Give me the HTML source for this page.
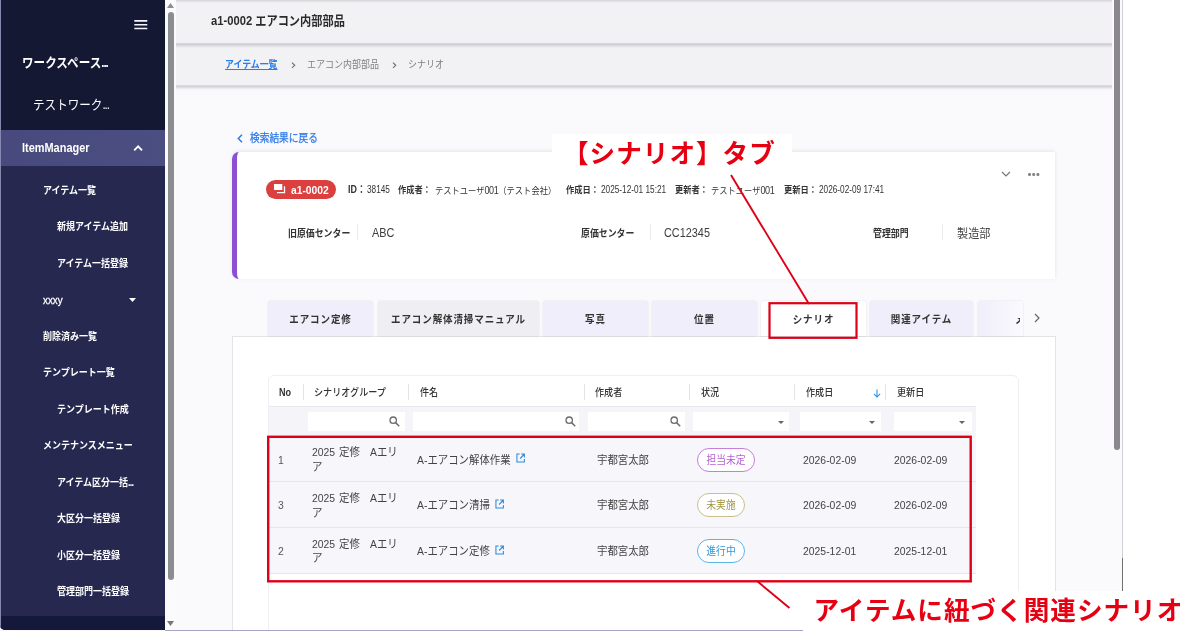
<!DOCTYPE html>
<html lang="ja">
<head>
<meta charset="utf-8">
<title>a1-0002 エアコン内部部品</title>
<style>
*{box-sizing:border-box;margin:0;padding:0}
html,body{width:1200px;height:644px;overflow:hidden;background:#fff}
body{position:relative;font-family:"Liberation Sans","Noto Sans CJK JP",sans-serif;color:#333;font-size:12px}
.abs{position:absolute}
.t,.th,.td{position:absolute;white-space:nowrap;line-height:1;transform-origin:0 50%;transform:scaleX(.89)}
.c{display:inline-block;transform-origin:0 50%}
/* screenshot frame */
#shot{position:absolute;left:0;top:0;width:1123px;height:631px;overflow:hidden;background:#faf9fc;will-change:transform}
/* sidebar */
#side{position:absolute;left:0;top:0;width:165px;height:630px;background:#262850;color:#fff;border-bottom-left-radius:5px;overflow:hidden}
#side .top{position:absolute;left:0;top:0;width:165px;height:130px;background:#141833}
#side .im{position:absolute;left:0;top:130px;width:165px;height:36px;background:linear-gradient(90deg,#484a7d,#4b4e81)}
#side .bot{position:absolute;left:0;top:616px;width:165px;height:14px;background:#14183a}
#side .edge{position:absolute;left:0;top:0;width:1px;height:630px;background:#8587ad}
.sm{font-weight:700;font-size:10px;color:#fff;transform:scaleX(.9)}
/* side scrollbar */
#sscr{position:absolute;left:165px;top:0;width:11px;height:630px;background:#fbfbfd}
#sscr .thumb{position:absolute;left:3px;top:12px;width:6px;height:568px;background:#8b8d91;border-radius:3px}
/* header */
#hdr{position:absolute;left:176px;top:0;width:936px;height:43px;background:#f2f1f4}
#bc{position:absolute;left:176px;top:47px;width:936px;height:38px;background:#f2f1f4}
.band{position:absolute;left:176px;width:936px;height:5px}
/* right scrollbar */
#rscr{position:absolute;left:1113px;top:0;width:9px;height:630px;background:#faf9fc}
#rscr .thumb{position:absolute;left:1px;top:-4px;width:6px;height:454px;background:#8a888c;border-radius:3px}
#rline{position:absolute;left:1122px;top:0;width:1px;height:591px;background:#d0cfd3}
/* card */
#card{position:absolute;left:232px;top:151.500px;width:823px;height:127px;background:#fff;border-left:5px solid #8a4fd3;border-radius:7px 0 0 7px;box-shadow:0 -1px 4px rgba(0,20,10,.09)}
.lbl{font-weight:700;font-size:10px;color:#333}
/* tabs */
.tab{position:absolute;top:301px;height:35px;background:#efeefa;border-radius:3px 3px 0 0;box-shadow:0 0 2px rgba(0,0,0,.12)}
.tab span{position:absolute;left:0;right:0;top:12.700px;text-align:center;font-weight:700;font-size:10.7px;letter-spacing:1px;color:#333;line-height:1;transform:scaleX(.89)}
#panel{position:absolute;left:232px;top:336px;width:824px;height:300px;background:#fff;border:1px solid #e4e3e8}
/* table */
#tbl{position:absolute;left:268px;top:375px;width:751px;height:260px;border:1px solid #efeef3;border-radius:6px 6px 0 0;background:#fff}
.row{position:absolute;left:269px;width:707px;background:#f7f6fb;border-bottom:1px solid #e6e5ea}
.fi{position:absolute;top:412px;height:19px;background:#fff}
.vsep{position:absolute;top:384px;width:1px;height:16px;background:#e3e2e6}
.th{top:388px;font-weight:500;font-size:10.2px;color:#333}
.td{font-size:11.7px;color:#444}
.pill{position:absolute;height:24px;border-radius:12px;border:1px solid;background:#fff}
.pill span{position:absolute;left:0;right:0;top:6px;text-align:center;font-size:11px;line-height:1;transform:scaleX(.89)}
/* annotations */
.red{color:#e60012;font-weight:700;font-size:25.6px;white-space:nowrap;line-height:1;font-family:"Liberation Sans","Noto Sans CJK JP",sans-serif}
</style>
</head>
<body>
<div id="all" style="position:absolute;left:0;top:0;width:1200px;height:644px;will-change:transform">
<div id="shot">
  <div id="hdr"></div>
  <div id="bc"></div>
  <div class="band" style="top:0;height:3px;background:linear-gradient(#d3d2d6,#e4e3e7 50%,#f2f1f4)"></div>
  <div class="band" style="top:43px;background:linear-gradient(#d9d8dc,#d0cfd3 30%,#e6e5e8 70%,#f2f1f4)"></div>
  <div class="band" style="top:85px;background:linear-gradient(#dddce0,#d3d2d6 30%,#ebeaee 70%,#faf9fc)"></div>

  <!-- sidebar -->
  <div id="side">
    <div class="top"></div><div class="im"></div><div class="bot"></div><div class="edge"></div>
    <svg class="abs" style="left:134px;top:19px" width="14" height="11" viewBox="0 0 14 11"><path d="M.3 1.900h13M.3 5.700h13M.3 9.500h13" stroke="#f4f4ff" stroke-width="1.600" fill="none"/></svg>
    <div class="t" style="left:22px;top:56px;font-weight:700;font-size:13px">ワークスペース<span style="letter-spacing:-1.2px">...</span></div>
    <div class="t" style="left:33px;top:98px;font-size:13px">テストワーク<span style="letter-spacing:-1.2px">...</span></div>
    <div class="t" style="left:22px;top:141.500px;font-weight:700;font-size:12.3px">ItemManager</div>
    <svg class="abs" style="left:133px;top:143.500px" width="11" height="8" viewBox="0 0 11 8"><path d="M1.200 6.300L5.100 2.400 9 6.300" stroke="#fff" stroke-width="1.900" fill="none"/></svg>
    <div class="t sm" style="left:43px;top:185.8px">アイテム一覧</div>
    <div class="t sm" style="left:57px;top:221.8px">新規アイテム追加</div>
    <div class="t sm" style="left:57px;top:258.8px">アイテム一括登録</div>
    <div class="t sm" style="left:43px;top:294.8px;font-weight:400;font-size:11.5px;transform:scaleX(.85);-webkit-text-stroke:.3px #fff">xxxy</div>
    <svg class="abs" style="left:129px;top:298px" width="7" height="4" viewBox="0 0 7 4"><path d="M0 0h7L3.5 4z" fill="#fff"/></svg>
    <div class="t sm" style="left:43px;top:331.8px">削除済み一覧</div>
    <div class="t sm" style="left:43px;top:367.8px">テンプレート一覧</div>
    <div class="t sm" style="left:57px;top:404.8px">テンプレート作成</div>
    <div class="t sm" style="left:43px;top:440.8px">メンテナンスメニュー</div>
    <div class="t sm" style="left:57px;top:477.8px">アイテム区分一括<span style="letter-spacing:-.9px">...</span></div>
    <div class="t sm" style="left:57px;top:513.8px">大区分一括登録</div>
    <div class="t sm" style="left:57px;top:550.8px">小区分一括登録</div>
    <div class="t sm" style="left:57px;top:586.8px">管理部門一括登録</div>
  </div>
  <div id="sscr"><div class="thumb"></div>
    <svg class="abs" style="left:2px;top:3px" width="7" height="5" viewBox="0 0 7 5"><path d="M0 5h7L3.5 0z" fill="#8e8d91"/></svg>
    <svg class="abs" style="left:2px;top:621px" width="7" height="5" viewBox="0 0 7 5"><path d="M0 0h7L3.5 5z" fill="#77767a"/></svg>
  </div>

  <div id="rscr"><div class="thumb"></div></div>

  <!-- header -->
  <div class="t" style="left:211px;top:15px;font-weight:700;font-size:12.6px;color:#2b2b2b">a1-0002 エアコン内部部品</div>
  <div class="t" style="left:225px;top:60.400px;font-weight:700;font-size:10px;color:#2b7de9;text-decoration:underline">アイテム一覧</div>
  <svg class="abs" style="left:290.5px;top:62px" width="5" height="7" viewBox="0 0 5 7"><path d="M1 .7L3.700 3.300 1 5.900" stroke="#707070" stroke-width="1.150" fill="none"/></svg>
  <div class="t" style="left:307px;top:60.400px;font-size:10.1px;color:#808080">エアコン内部部品</div>
  <svg class="abs" style="left:391.5px;top:62px" width="5" height="7" viewBox="0 0 5 7"><path d="M1 .7L3.700 3.300 1 5.900" stroke="#707070" stroke-width="1.150" fill="none"/></svg>
  <div class="t" style="left:407.500px;top:60.400px;font-size:10.1px;color:#808080">シナリオ</div>

  <!-- back link -->
  <svg class="abs" style="left:237px;top:133.500px" width="6" height="9" viewBox="0 0 6 9"><path d="M5 .7L1.3 4.5 5 8.3" stroke="#2b7de9" stroke-width="1.5" fill="none"/></svg>
  <div class="t" style="left:250px;top:132.800px;font-size:10.9px;color:#2f7be6;-webkit-text-stroke:.25px #2f7be6">検索結果に戻る</div>

  <!-- card -->
  <div id="card"></div>
  <div class="abs" style="left:266px;top:180px;width:70px;height:19px;border-radius:9.5px;background:#db3f3e"></div>
  <svg class="abs" style="left:273px;top:183px" width="13" height="11" viewBox="0 0 13 11"><path d="M1 1h8.300v6H1z" fill="#fff"/><path d="M11.500 3.300v6.300H4" stroke="#fff" stroke-width="1.300" fill="none"/></svg>
  <div class="t" style="left:290.500px;top:184.800px;font-weight:700;font-size:10.5px;color:#fff;transform:scaleX(.98)">a1-0002</div>
  <div class="t lbl" style="left:347.500px;top:185.200px;font-size:10px">ID：</div>
  <div class="t" style="left:367.300px;top:185px;font-size:10.2px;transform:scaleX(.81)">38145</div>
  <div class="t lbl" style="left:398px;top:185.500px;font-size:9.3px">作成者：</div>
  <div class="t" style="left:434.500px;top:185.500px;font-size:9.3px">テストユーザ<span style="font-size:10.2px;letter-spacing:-.5px">001</span>（テスト会社）</div>
  <div class="t lbl" style="left:566px;top:185.500px;font-size:9.3px">作成日：</div>
  <div class="t" style="left:601px;top:185px;font-size:10.2px;transform:scaleX(.81)">2025-12-01 15:21</div>
  <div class="t lbl" style="left:675px;top:185.500px;font-size:9.3px">更新者：</div>
  <div class="t" style="left:711px;top:185.500px;font-size:9.3px">テストユーザ<span style="font-size:10.2px;letter-spacing:-.5px">001</span></div>
  <div class="t lbl" style="left:784px;top:185.500px;font-size:9.3px">更新日：</div>
  <div class="t" style="left:819px;top:185px;font-size:10.2px;transform:scaleX(.81)">2026-02-09 17:41</div>
  <svg class="abs" style="left:1001px;top:171px" width="10" height="6" viewBox="0 0 10 6"><path d="M1 1l4 4 4-4" stroke="#777" stroke-width="1.2" fill="none"/></svg>
  <div class="abs" style="left:1028px;top:173px;width:2.600px;height:2.600px;background:#858585;border-radius:50%;box-shadow:4.200px 0 0 #858585,8.400px 0 0 #858585"></div>

  <div class="t lbl" style="left:288px;top:229px">旧原価センター</div>
  <div class="abs" style="left:357px;top:224px;width:1px;height:16px;background:#ebeaef"></div>
  <div class="t" style="left:372px;top:226.500px;font-size:12.8px;color:#3c3c3c;transform:scaleX(.85)">ABC</div>
  <div class="t lbl" style="left:580.500px;top:229px">原価センター</div>
  <div class="abs" style="left:650px;top:224px;width:1px;height:16px;background:#ebeaef"></div>
  <div class="t" style="left:664px;top:226.500px;font-size:12.8px;color:#3c3c3c;transform:scaleX(.85)">CC12345</div>
  <div class="t lbl" style="left:873px;top:229px">管理部門</div>
  <div class="abs" style="left:942px;top:224px;width:1px;height:16px;background:#ebeaef"></div>
  <div class="t" style="left:957px;top:228px;font-size:12.5px;color:#444">製造部</div>

  <!-- panel + tabs -->
  <div id="panel"></div>
  <div class="tab" style="left:268px;width:105px"><span>エアコン定修</span></div>
  <div class="tab" style="left:378px;width:161px;background:#efeef3"><span>エアコン解体清掃マニュアル</span></div>
  <div class="tab" style="left:543px;width:105px"><span>写真</span></div>
  <div class="tab" style="left:652px;width:105px"><span>位置</span></div>
  <div class="tab" style="left:761px;width:105px;background:#fff"><span>シナリオ</span></div>
  <div class="tab" style="left:870px;width:103px"><span>関連アイテム</span></div>
  <div class="tab" style="left:978px;width:45px;background:linear-gradient(90deg,#efeefa,#fbfaff)"></div>
  <div class="abs" style="left:1015px;top:318px;width:4.500px;height:6px;overflow:hidden"><div class="t" style="left:0;top:-4px;font-size:10.7px;font-weight:700;letter-spacing:1px;color:#333">メモ</div></div>
  <svg class="abs" style="left:1034px;top:313px" width="6" height="10" viewBox="0 0 6 10"><path d="M1 1l4 4-4 4" stroke="#666" stroke-width="1.2" fill="none"/></svg>

  <!-- table -->
  <div id="tbl"></div>
  <!-- header row -->
  <div class="th" style="left:279px;font-weight:700">No</div>
  <div class="vsep" style="left:303px"></div>
  <div class="th" style="left:314px">シナリオグループ</div>
  <div class="vsep" style="left:408px"></div>
  <div class="th" style="left:420px">件名</div>
  <div class="vsep" style="left:584px"></div>
  <div class="th" style="left:595px">作成者</div>
  <div class="vsep" style="left:689px"></div>
  <div class="th" style="left:701px">状況</div>
  <div class="vsep" style="left:794px"></div>
  <div class="th" style="left:806px">作成日</div>
  <svg class="abs" style="left:872.700px;top:388.700px" width="8" height="9" viewBox="0 0 9 10"><path d="M4.5 .5v8M1 5.5l3.5 3.5L8 5.500" stroke="#2b8fe0" stroke-width="1.2" fill="none"/></svg>
  <div class="vsep" style="left:885px"></div>
  <div class="th" style="left:897px">更新日</div>
  <!-- filter row -->
  <div class="abs" style="left:269px;top:406px;width:707px;height:31px;background:#f5f4f8;border-top:1px solid #e9e8ec"></div>
  <div class="fi" style="left:308px;width:97px"></div>
  <div class="fi" style="left:413px;width:166px"></div>
  <div class="fi" style="left:588px;width:97px"></div>
  <div class="fi" style="left:693px;width:96px"></div>
  <div class="fi" style="left:800px;width:81px"></div>
  <div class="fi" style="left:894px;width:78px"></div>
  <svg class="abs mag" style="left:389px;top:416px" width="11" height="11" viewBox="0 0 11 11"><circle cx="4.2" cy="4.2" r="3.2" stroke="#6d6d6d" stroke-width="1.300" fill="none"/><path d="M6.6 6.600l3.600 3.600" stroke="#6d6d6d" stroke-width="1.500"/></svg>
  <svg class="abs mag" style="left:565px;top:416px" width="11" height="11" viewBox="0 0 11 11"><circle cx="4.2" cy="4.2" r="3.2" stroke="#6d6d6d" stroke-width="1.300" fill="none"/><path d="M6.6 6.600l3.600 3.600" stroke="#6d6d6d" stroke-width="1.500"/></svg>
  <svg class="abs mag" style="left:670px;top:416px" width="11" height="11" viewBox="0 0 11 11"><circle cx="4.2" cy="4.2" r="3.2" stroke="#6d6d6d" stroke-width="1.300" fill="none"/><path d="M6.6 6.600l3.600 3.600" stroke="#6d6d6d" stroke-width="1.500"/></svg>
  <svg class="abs" style="left:778px;top:421px" width="6" height="3" viewBox="0 0 6 3"><path d="M0 0h6L3 3z" fill="#666"/></svg>
  <svg class="abs" style="left:869px;top:421px" width="6" height="3" viewBox="0 0 6 3"><path d="M0 0h6L3 3z" fill="#666"/></svg>
  <svg class="abs" style="left:959px;top:421px" width="6" height="3" viewBox="0 0 6 3"><path d="M0 0h6L3 3z" fill="#666"/></svg>
  <!-- rows -->
  <div class="row" style="top:436.6px;height:45.7px"></div>
  <div class="td" style="left:278px;top:453.6px;color:#555">1</div>
  <div class="td" style="left:312px;top:446.2px">2025</div>
  <div class="td" style="left:338.5px;top:446.2px">定修</div>
  <div class="td" style="left:370px;top:446.2px">Aエリ</div>
  <div class="td" style="left:312px;top:461px">ア</div>
  <div class="td" style="left:417px;top:453.6px">A-エアコン解体作業</div>
  <svg class="abs" style="left:515.8px;top:453.3px" width="9.3" height="10" viewBox="0 0 10 10" preserveAspectRatio="none"><path d="M4 1H1v8h8V6" stroke="#2e8ad8" stroke-width="1.150" fill="none"/><path d="M5.5 1H9v3.5M9 1L4.5 5.5" stroke="#2e8ad8" stroke-width="1.150" fill="none"/></svg>
  <div class="td" style="left:597px;top:453.6px">宇都宮太郎</div>
  <div class="pill" style="left:697px;top:447.6px;width:58px;border-color:#c77ddb;color:#b45fd0"><span>担当未定</span></div>
  <div class="td" style="left:802.5px;top:453.6px">2026-02-09</div>
  <div class="td" style="left:893.5px;top:453.6px">2026-02-09</div>
  <div class="row" style="top:482.2px;height:45.7px"></div>
  <div class="td" style="left:278px;top:499.2px;color:#555">3</div>
  <div class="td" style="left:312px;top:491.8px">2025</div>
  <div class="td" style="left:338.5px;top:491.8px">定修</div>
  <div class="td" style="left:370px;top:491.8px">Aエリ</div>
  <div class="td" style="left:312px;top:506.6px">ア</div>
  <div class="td" style="left:417px;top:499.2px">A-エアコン清掃</div>
  <svg class="abs" style="left:494.8px;top:498.9px" width="9.3" height="10" viewBox="0 0 10 10" preserveAspectRatio="none"><path d="M4 1H1v8h8V6" stroke="#2e8ad8" stroke-width="1.150" fill="none"/><path d="M5.5 1H9v3.5M9 1L4.5 5.5" stroke="#2e8ad8" stroke-width="1.150" fill="none"/></svg>
  <div class="td" style="left:597px;top:499.2px">宇都宮太郎</div>
  <div class="pill" style="left:697px;top:493.2px;width:48px;border-color:#c9bf8a;color:#a39747"><span>未実施</span></div>
  <div class="td" style="left:802.5px;top:499.2px">2026-02-09</div>
  <div class="td" style="left:893.5px;top:499.2px">2026-02-09</div>
  <div class="row" style="top:527.9px;height:45.7px"></div>
  <div class="td" style="left:278px;top:544.9px;color:#555">2</div>
  <div class="td" style="left:312px;top:537.5px">2025</div>
  <div class="td" style="left:338.5px;top:537.5px">定修</div>
  <div class="td" style="left:370px;top:537.5px">Aエリ</div>
  <div class="td" style="left:312px;top:552.3px">ア</div>
  <div class="td" style="left:417px;top:544.9px">A-エアコン定修</div>
  <svg class="abs" style="left:494.8px;top:544.6px" width="9.3" height="10" viewBox="0 0 10 10" preserveAspectRatio="none"><path d="M4 1H1v8h8V6" stroke="#2e8ad8" stroke-width="1.150" fill="none"/><path d="M5.5 1H9v3.5M9 1L4.5 5.5" stroke="#2e8ad8" stroke-width="1.150" fill="none"/></svg>
  <div class="td" style="left:597px;top:544.9px">宇都宮太郎</div>
  <div class="pill" style="left:697px;top:538.9px;width:48px;border-color:#5ab5e8;color:#2f97dc"><span>進行中</span></div>
  <div class="td" style="left:802.5px;top:544.9px">2025-12-01</div>
  <div class="td" style="left:893.5px;top:544.9px">2025-12-01</div>
</div>
<div id="rline"></div>
<div class="abs" style="left:1122px;top:558px;width:1px;height:33px;background:#707070"></div>
<!-- annotations -->
<div class="abs" style="left:552px;top:134px;width:240px;height:40px;background:#fff"></div>
<div class="abs red" style="left:563px;top:141.500px;letter-spacing:1px">【シナリオ】タブ</div>
<div class="abs" style="left:803px;top:591px;width:397px;height:53px;background:#fff"></div>
<div class="abs" style="left:0;top:631px;width:1200px;height:13px;background:#fff"></div>
<div class="abs" style="left:165px;top:630px;width:638px;height:1px;background:#a5a4c4"></div>
<div class="abs red" style="left:813.500px;top:598.500px;letter-spacing:1px">アイテムに紐づく関連シナリオ</div>
<svg class="abs" style="left:0;top:0" width="1200" height="644" viewBox="0 0 1200 644">
  <rect x="769.500" y="303.200" width="87" height="34.600" fill="none" stroke="#de0016" stroke-width="2.200"/>
  <rect x="268.2" y="436.8" width="702.5" height="144.5" fill="none" stroke="#de0016" stroke-width="2.400"/>
  <path d="M731 175L809 304" stroke="#de0016" stroke-width="1.900"/>
  <path d="M757 581L789.5 608" stroke="#de0016" stroke-width="1.900"/>
</svg>
</div>
</body>
</html>
